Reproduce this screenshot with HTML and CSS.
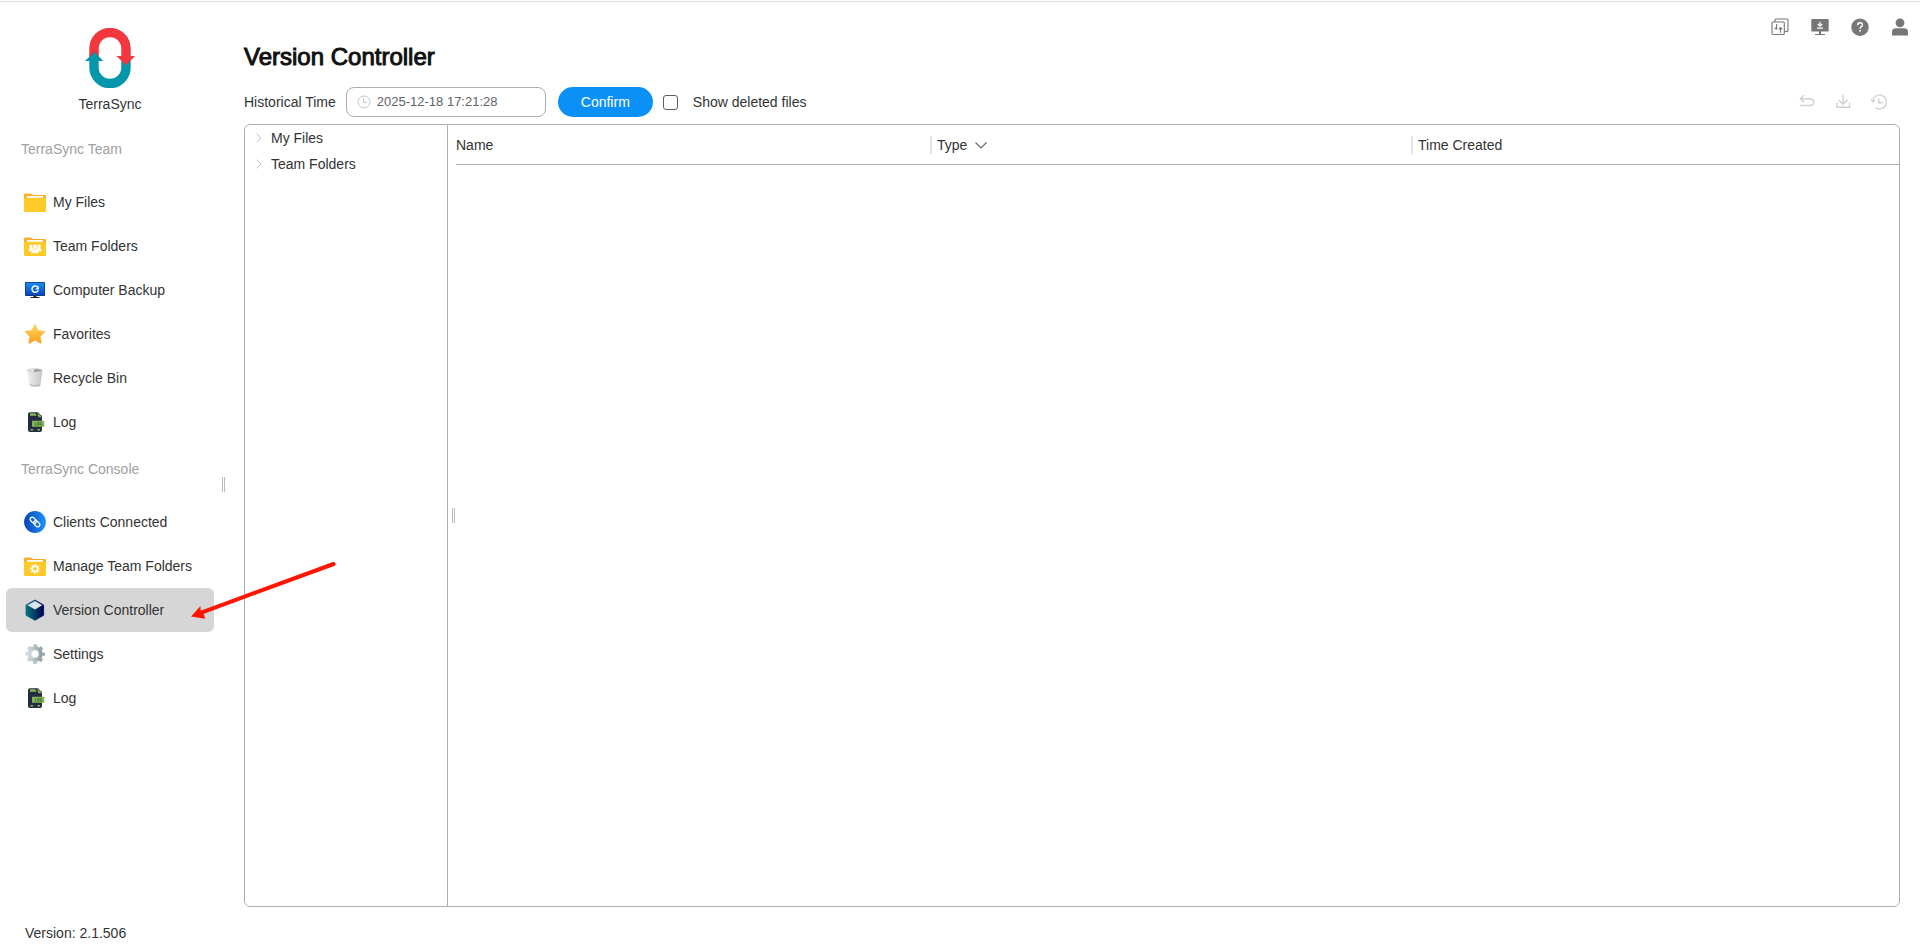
FILE: index.html
```html
<!DOCTYPE html>
<html lang="en">
<head>
    <meta charset="UTF-8" />
    <meta name="viewport" content="width=device-width, initial-scale=1.0"/>
    <title>TerraSync - Version Controller</title>
    <link rel="stylesheet" href="styles.css">
</head>
<body>
<svg class="defs" aria-hidden="true">
    <defs>
        <linearGradient id="blue" x1="0" y1="0" x2="1" y2="0">
            <stop offset="0" stop-color="#0646b4"/><stop offset="1" stop-color="#1d93fb"/>
        </linearGradient>
        <linearGradient id="screen" x1="0" y1="0" x2="0" y2="1">
            <stop offset="0" stop-color="#1a8df5"/><stop offset="1" stop-color="#0546b8"/>
        </linearGradient>
        <linearGradient id="gold" x1="0" y1="0" x2="0" y2="1">
            <stop offset="0" stop-color="#ffd86a"/><stop offset="1" stop-color="#fb9e16"/>
        </linearGradient>
        <linearGradient id="bin" x1="0" y1="0" x2="1" y2="0">
            <stop offset="0" stop-color="#f2f2f2"/><stop offset="1" stop-color="#c4c4c4"/>
        </linearGradient>
        <linearGradient id="cube" x1="0" y1="0" x2="1" y2="0">
            <stop offset="0" stop-color="#047480"/><stop offset="1" stop-color="#020250"/>
        </linearGradient>
        <linearGradient id="steel" x1="0" y1="0" x2="1" y2="0">
            <stop offset="0" stop-color="#cfd8dc"/><stop offset="1" stop-color="#90a0a6"/>
        </linearGradient>
    </defs>
    <symbol id="i-folder" viewBox="0 0 22 22">
        <path d="M0 3.700q0-1.200 1.200-1.200H6.500q.7 0 1.200.6l.9 1H20.800q1.200 0 1.200 1.200V12H0z" fill="#fbac2c"/>
        <rect x="3" y="5" width="16" height="2" fill="#fff"/>
        <path d="M0 6.800h22V20.100q0 1-1 1H1q-1 0-1-1z" fill="#ffc928"/>
    </symbol>
    <symbol id="i-log" viewBox="0 0 22 22">
        <path d="M6 1.200h8l4 4.300V9H4V3.200q0-2 2-2z" fill="#252b41"/>
        <rect x="4" y="4" width="14" height="17" rx="2" fill="#252b41"/>
        <path d="M6 2.200h5l2 2.500H6zM13 1.200l5 5h-3.500z" fill="#83b856"/>
        <rect x="8" y="9.800" width="12.300" height="6" rx=".4" fill="#83b856"/>
        <path d="M11.300 11.500v2.600h1.300M13.700 11.500h1.400v2.600h-1.400zM17.900 11.500h-1.300v2.600h1.300v-1" fill="none" stroke="#3c5a38" stroke-width=".7"/>
        <path d="M6.500 18.700h2.500M13.500 18.700h2.500" stroke="#83b856" stroke-width="1.400"/>
    </symbol>
</svg>

<div class="app">
    <aside class="sidebar">
        <div class="brand">
            <svg class="logo" viewBox="0 0 50 60">
                <path d="M9 29V20.500a16 16 0 0 1 32 0V29" fill="none" stroke="#f2373f" stroke-width="9.400"/>
                <path d="M9 29v10.500a16 16 0 0 0 32 0V29" fill="none" stroke="#0496ab" stroke-width="9.400"/>
                <path d="M4.300 27.500L9.300 22.700l4.500 4.500" fill="none" stroke="#cf2c38" stroke-width="1"/>
                <path d="M0 33L9.300 24l9 9z" fill="#0496ab"/>
                <path d="M31.500 28H50l-9 9.300z" fill="#f2373f"/>
            </svg>
            <span>TerraSync</span>
        </div>

        <h2 class="group-title">TerraSync Team</h2>
        <nav class="menu">
            <a class="menu-item"><svg class="icon"><use href="#i-folder"/></svg>My Files</a>
            <a class="menu-item">
                <svg class="icon" viewBox="0 0 22 22">
                    <use href="#i-folder"/>
                    <g fill="#fff">
                        <circle cx="6.900" cy="11.200" r="1.700"/><circle cx="15.100" cy="11.200" r="1.700"/>
                        <path d="M4.500 16.300q0-3.500 2.600-3.500h7.800q2.600 0 2.600 3.500z"/>
                    </g>
                    <g fill="#fff" stroke="#ffc928" stroke-width=".4">
                        <path d="M7 18.200q0-4.400 4-4.400t4 4.400z"/><circle cx="11" cy="11.400" r="2.400"/>
                    </g>
                </svg>Team Folders</a>
            <a class="menu-item">
                <svg class="icon" viewBox="0 0 22 22">
                    <rect x="1" y="3" width="20" height="14" rx=".8" fill="#123a78"/>
                    <rect x="1.800" y="3.800" width="18.400" height="12.400" fill="url(#screen)"/>
                    <path d="M13.700 8.100A3.200 3.200 0 1 0 14.200 11.200" fill="none" stroke="#fff" stroke-width="1.500"/>
                    <path d="M14.900 7v3.400h-3.700z" fill="#fff"/>
                    <path d="M9.500 17h3v1H15.500v1H6.500v-1h3z" fill="#1b2433"/>
                </svg>Computer Backup</a>
            <a class="menu-item">
                <svg class="icon" viewBox="0 0 22 22">
                    <path d="M11 1.800l2.900 6 6.500.9-4.700 4.600 1.100 6.500L11 16.700l-5.800 3.100 1.100-6.500L1.600 8.700l6.500-.9z" fill="url(#gold)" stroke="url(#gold)" stroke-width="1.400" stroke-linejoin="round"/>
                </svg>Favorites</a>
            <a class="menu-item">
                <svg class="icon" viewBox="0 0 22 22">
                    <path d="M3.200 3.500h15.200l-2 15q-.2 1.500-5.600 1.500t-5.600-1.500z" fill="url(#bin)"/>
                    <ellipse cx="10.800" cy="3.500" rx="7.500" ry="1.900" fill="#9a9a9a" stroke="#e2e2e2" stroke-width=".9"/>
                    <path d="M4 3.500q2-1.600 7-1.400l-2 2.900q-4-.2-5-1.500z" fill="#e5e5e5"/>
                    <path d="M6 17.800q4.800 1.800 9.600 0" fill="none" stroke="#a6a6a6" stroke-width=".8"/>
                </svg>Recycle Bin</a>
            <a class="menu-item"><svg class="icon"><use href="#i-log"/></svg>Log</a>
        </nav>

        <h2 class="group-title">TerraSync Console</h2>
        <nav class="menu">
            <a class="menu-item">
                <svg class="icon" viewBox="0 0 22 22">
                    <circle cx="11" cy="11" r="10.900" fill="url(#blue)"/>
                    <g fill="none" stroke="#fff" stroke-width="1.200" transform="rotate(45 11 11)">
                        <rect x="5" y="8.900" width="7" height="4.200" rx="2.100"/>
                        <rect x="10" y="8.900" width="7" height="4.200" rx="2.100"/>
                    </g>
                </svg>Clients Connected</a>
            <a class="menu-item">
                <svg class="icon" viewBox="0 0 22 22">
                    <use href="#i-folder"/>
                    <circle cx="11" cy="13.800" r="2.700" fill="none" stroke="#fff" stroke-width="1.700"/>
                    <circle cx="11" cy="13.800" r="4" fill="none" stroke="#fff" stroke-width="1.800" stroke-dasharray="1.571" stroke-dashoffset=".785"/>
                </svg>Manage Team Folders</a>
            <a class="menu-item active">
                <svg class="icon" viewBox="0 0 22 22">
                    <path d="M11 1l8.600 5v10.300L11 21.300l-9-5V6z" fill="url(#cube)" stroke="url(#cube)" stroke-width=".8" stroke-linejoin="round"/>
                    <path d="M11 1.900l7.300 4.300L11 10.500 3.500 6.200z" fill="#d9e3ea"/>
                </svg>Version Controller</a>
            <a class="menu-item">
                <svg class="icon" viewBox="0 0 22 22">
                    <circle cx="11" cy="11" r="5.700" fill="none" stroke="url(#steel)" stroke-width="4"/>
                    <circle cx="11" cy="11" r="8.500" fill="none" stroke="url(#steel)" stroke-width="2.400" stroke-dasharray="3.700 2.976" stroke-dashoffset="1.850"/>
                    <circle cx="11" cy="11" r="3.700" fill="#fff"/>
                    <circle cx="11" cy="11" r="3.700" fill="none" stroke="#dfe5e8" stroke-width="1"/>
                </svg>Settings</a>
            <a class="menu-item"><svg class="icon"><use href="#i-log"/></svg>Log</a>
        </nav>

        <div class="version">Version: 2.1.506</div>
    </aside>

    <div class="splitter main-splitter"></div>

    <main class="content">
        <div class="top-icons">
            <svg viewBox="0 0 18 18">
                <g fill="none" stroke="#777" stroke-width="1.100">
                    <rect x="1" y="4" width="12.300" height="12.500" rx="1"/>
                    <path d="M4 4V2q0-1 1-1h11q1 0 1 1v10.500q0 1-1 1h-2.700"/>
                    <path d="M5.600 6v5.300M3.700 9.600l1.900 1.900M9.500 14.700V9.500M7.700 11.300L9.500 9.500l1.800 1.800"/>
                </g>
            </svg>
            <svg viewBox="0 0 18 18">
                <rect x=".3" y="1" width="17.400" height="12.400" rx="1.200" fill="#777"/>
                <path d="M8 13h2v3h4v1H4v-1h4z" fill="#777"/>
                <path d="M9 3.800v4M6.800 6L9 8.100 11.200 6M6 10.200h6" fill="none" stroke="#fff" stroke-width="1.200"/>
            </svg>
            <svg viewBox="0 0 18 18">
                <circle cx="9" cy="9.200" r="8.700" fill="#777"/>
                <path d="M6.700 7.200q0-2.500 2.400-2.500t2.300 2.200q0 1.300-1.400 2-.9.500-.9 1.800" fill="none" stroke="#fff" stroke-width="1.500"/>
                <rect x="8.300" y="12" width="1.600" height="1.600" fill="#fff"/>
            </svg>
            <svg viewBox="0 0 18 18">
                <circle cx="9" cy="4.800" r="4.400" fill="#777"/>
                <path d="M1 17.500v-3.500q0-3.700 3.700-3.700h8.600q3.700 0 3.700 3.700v3.500z" fill="#777"/>
            </svg>
        </div>

        <h1>Version Controller</h1>

        <div class="toolbar">
            <label>Historical Time</label>
            <div class="date-input">
                <svg viewBox="0 0 14 14">
                    <circle cx="7" cy="7" r="6" fill="none" stroke="#c0c4cc"/>
                    <path d="M6.500 3v4.500H10" fill="none" stroke="#c0c4cc"/>
                </svg>
                <span>2025-12-18 17:21:28</span>
            </div>
            <button class="confirm-btn">Confirm</button>
            <input type="checkbox" id="showDeleted" class="checkbox" />
            <label for="showDeleted">Show deleted files</label>

            <div class="actions">
                <svg viewBox="0 0 16 16">
                    <path d="M5 1.300L1.300 4.700 5 8.200M1.500 4.700h9.800a3.300 3.300 0 0 1 0 6.800H1" fill="none" stroke="#d3d0cc" stroke-width="1.400"/>
                </svg>
                <svg viewBox="0 0 16 16">
                    <path d="M8 .5v9.700M3.500 6L8 10.300 12.500 6M1.800 8.500v4.800h12.800V8.500" fill="none" stroke="#d3d0cc" stroke-width="1.400"/>
                </svg>
                <svg viewBox="0 0 16 16">
                    <path d="M1.600 7.500A7 7 0 1 1 4.500 13.600M7.800 4.300v4.400h4M.2 5.500l1.500 2.300 2.400-1.600" fill="none" stroke="#d3d0cc" stroke-width="1.400"/>
                </svg>
            </div>
        </div>

        <section class="panel">
            <ul class="tree">
                <li><svg viewBox="0 0 8 10"><path d="M1.500.7L6 5 1.500 9.300" fill="none" stroke="#c0c4cc"/></svg>My Files</li>
                <li><svg viewBox="0 0 8 10"><path d="M1.500.7L6 5 1.500 9.300" fill="none" stroke="#c0c4cc"/></svg>Team Folders</li>
            </ul>
            <div class="splitter"></div>
            <div class="table">
                <div class="table-head">
                    <div class="th">Name</div>
                    <div class="th">Type
                        <svg viewBox="0 0 14 8"><path d="M1.500 1.500L7 7l5.500-5.500" fill="none" stroke="#666" stroke-width="1.100"/></svg>
                    </div>
                    <div class="th">Time Created</div>
                </div>
            </div>
        </section>
    </main>
</div>

<svg class="pointer" viewBox="0 0 150 62">
    <path d="M143.500 4L12 52.300" stroke="#ff1500" stroke-width="4" stroke-linecap="round"/>
    <path d="M1 56.500L10.500 46l.3 5.700 3.400 3.300L15 58.700z" fill="#ff1500"/>
</svg>
</body>
</html>
```
FILE: styles.css
```css
:root {
    --text-color: #333;
    --muted-color: #a0a0a0;
    --border-color: #adadad;
    --primary-color: #0a90f7;
}
* {
    box-sizing: border-box;
    margin: 0;
    padding: 0;
}
body {
    font-family: "Liberation Sans", Arial, sans-serif;
    font-size: 14px;
    line-height: 20px;
    color: var(--text-color);
    background: white;
    overflow: hidden;
}
svg {
    display: block;
    flex-shrink: 0;
}
.defs {
    position: absolute;
    width: 0;
    height: 0;
}
.app {
    display: flex;
    height: 100vh;
    border-top: 1px solid #fff;
    box-shadow: inset 0 1px 0 #dedede;
}

/* sidebar */
.sidebar {
    display: flex;
    flex-direction: column;
    width: 220px;
    padding: 27px 6px 4px;
}
.brand {
    display: flex;
    flex-direction: column;
    align-items: center;
    gap: 6px;
    height: 101px;
}
.logo {
    width: 50px;
    height: 60px;
}
.group-title {
    padding: 10px 15px 0;
    height: 51px;
    font-size: 14px;
    font-weight: normal;
    color: var(--muted-color);
}
.menu + .group-title {
    padding-top: 15px;
    height: 56px;
}
.menu-item {
    display: flex;
    align-items: center;
    gap: 7px;
    width: 208px;
    height: 44px;
    padding-left: 18px;
    border-radius: 6px;
    cursor: pointer;
}
.menu-item.active {
    background: #d6d6d6;
}
.icon {
    width: 22px;
    height: 22px;
}
.version {
    margin-top: auto;
    padding-left: 19px;
}
.splitter {
    align-self: center;
    width: 3px;
    height: 15px;
    border: 1px solid #bbb;
    border-width: 0 1px;
}
.main-splitter {
    margin: 20px 0 0 2px;
}

/* content */
.content {
    display: flex;
    flex-direction: column;
    flex: 1;
    padding: 17px 20px 40px 19px;
}
.top-icons {
    display: flex;
    justify-content: flex-end;
    gap: 22px;
    margin-right: -9px;
}
.top-icons svg {
    width: 18px;
    height: 18px;
}
h1 {
    margin-top: 6px;
    font-size: 24px;
    font-weight: normal;
    line-height: 30px;
    color: #111;
    -webkit-text-stroke: 1px #111;
}
.toolbar {
    display: flex;
    align-items: center;
    height: 30px;
    margin: 15px 0 7px;
}
.date-input {
    display: flex;
    align-items: center;
    gap: 6px;
    width: 200px;
    height: 30px;
    margin: 0 12px 0 10px;
    padding-left: 10px;
    border: 1px solid var(--border-color);
    border-radius: 8px;
    font-size: 13px;
    color: #606266;
}
.date-input svg {
    width: 14px;
    height: 14px;
}
.confirm-btn {
    width: 95px;
    height: 30px;
    border: none;
    border-radius: 15px;
    background: var(--primary-color);
    color: white;
    font: inherit;
    cursor: pointer;
}
.checkbox {
    appearance: none;
    width: 15px;
    height: 15px;
    margin: 1px 15px 0 10px;
    border: 1px solid #5f5f5f;
    border-radius: 3px;
}
.actions {
    display: flex;
    gap: 20px;
    margin-left: auto;
    margin-right: 13px;
}
.actions svg {
    width: 16px;
    height: 16px;
}

/* file panel */
.panel {
    display: flex;
    flex: 1;
    border: 1px solid var(--border-color);
    border-radius: 6px;
}
.tree {
    width: 203px;
    padding-left: 10px;
    border-right: 1px solid var(--border-color);
    list-style: none;
}
.tree li {
    display: flex;
    align-items: center;
    gap: 8px;
    height: 26px;
}
.tree svg {
    width: 8px;
    height: 10px;
}
.panel .splitter {
    margin: 0 1px 1px 4px;
}
.table {
    flex: 1;
}
.table-head {
    display: grid;
    grid-template-columns: 474px 481px 1fr;
    align-items: center;
    height: 40px;
    border-bottom: 1px solid var(--border-color);
}
.th {
    display: flex;
    align-items: center;
    gap: 7px;
    height: 18px;
}
.th + .th {
    padding-left: 5px;
    border-left: 2px solid #e4e4e4;
}
.th svg {
    width: 14px;
    height: 8px;
}

/* callout arrow over the active menu item */
.pointer {
    position: absolute;
    left: 190px;
    top: 560px;
    width: 150px;
    height: 62px;
    pointer-events: none;
}
```
